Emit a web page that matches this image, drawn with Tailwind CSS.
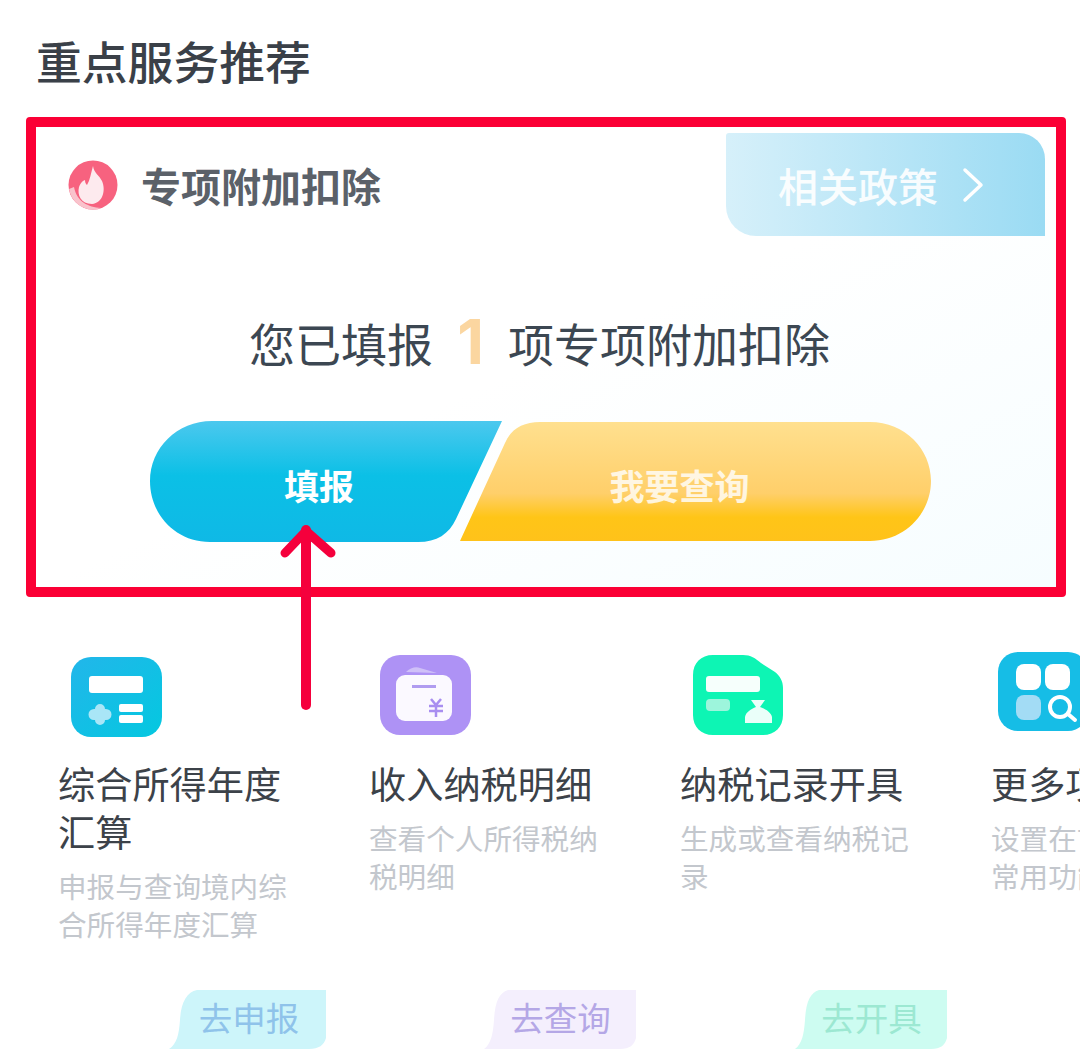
<!DOCTYPE html>
<html lang="zh-CN">
<head>
<meta charset="utf-8">
<title>重点服务推荐</title>
<script src="https://cdn.jsdelivr.net/npm/@tailwindcss/browser@4"></script>
</head>
<body class="bg-white">
<main class="relative w-[1080px] h-[1056px] overflow-hidden bg-white [font-family:'Noto_Sans_CJK_SC','Noto_Sans',sans-serif]">
  <h1 class="pt-[30px] pl-[36px] h-[92px] mb-[25px] text-[45.800px] leading-[60px] font-medium text-[#3a4048]">重点服务推荐</h1>

  <section class="ml-[26px] w-[1040px] h-[480px] border-[10px] border-[#fb0035] rounded-[4px] bg-gradient-to-br from-white via-white to-[#f6fdff]">
    <div class="flex items-center justify-between pt-[6px] pr-[11px] pl-[32px]">
      <div class="flex items-center gap-[23px]">
        <svg class="w-[50px] h-[50px]" viewBox="0 0 50 50">
          <circle cx="25" cy="25" r="24.500" fill="#f7627f"/>
          <path d="M1 29a24.500 24.500 0 0 0 24 20.500c3 0 6-.6 8-1.500C20 47 9 42 6 27z" fill="#f9c3cc"/>
          <path d="M25 6c1 7 6 9 9 15 4 9 1 22-10 23-11 0-15-9-13-17 1-3 3-6 6-7 0 3 1 4 2 5 3-5 4-12 6-19z" fill="#fdeaee"/>
        </svg>
        <h2 class="text-[40px] leading-[56px] font-bold text-[#5b6169]">专项附加扣除</h2>
      </div>
      <a class="flex items-center w-[319px] h-[103px] pl-[52px] gap-[24px] rounded-tr-[26px] rounded-bl-[30px] rounded-tl-[3px] bg-gradient-to-r from-[#d6f0fa] to-[#9adbf3] text-white/90 text-[40px] font-medium">
        <span>相关政策</span>
        <svg class="w-[22px] h-[36px]" viewBox="0 0 22 36" fill="none" stroke="#fff" stroke-width="3.500" stroke-linecap="round" stroke-linejoin="round"><path d="M3 3l16 15L3 33"/></svg>
      </a>
    </div>

    <div class="ml-[114px] w-[781px] flex flex-col items-center">
      <p class="mt-[74px] h-[64px] pr-[2px] flex items-center justify-center text-[46px] text-[#3c4752]">
        <span>您已填报</span>
        <span class="w-[75px] text-center text-[62px] leading-[64px] font-bold text-[#fbd6a0] [font-family:'Inter',sans-serif]">1</span>
        <span>项专项附加扣除</span>
      </p>
      <div class="mt-[47px] w-full flex">
        <button class="relative w-[352px] h-[121px] flex items-center justify-center pr-[14px] pt-[8px] text-[35px] font-bold text-white">
          <svg class="absolute inset-0" width="352" height="121" viewBox="0 0 352 121">
            <defs><linearGradient id="b1" x1="0" y1="0" x2="0" y2="1"><stop offset="0" stop-color="#4cc8ee"/><stop offset=".45" stop-color="#0bc0e6"/><stop offset="1" stop-color="#0fb9e6"/></linearGradient></defs>
            <path d="M62 0H352L306 98C299 113 287 121 268 121H60C25 121 0 93 0 60S27 0 62 0z" fill="url(#b1)"/>
          </svg>
          <span class="relative">填报</span>
        </button>
        <button class="relative -ml-[42px] w-[471px] h-[121px] flex items-center justify-center pr-[32px] pt-[8px] text-[35px] font-bold text-white/80">
          <svg class="absolute inset-0" width="471" height="121" viewBox="0 0 471 121">
            <defs><linearGradient id="b2" x1="0" y1="0" x2="0" y2="1"><stop offset="0" stop-color="#ffe08f"/><stop offset=".6" stop-color="#ffcf6a"/><stop offset=".8" stop-color="#ffc517"/><stop offset="1" stop-color="#ffc21a"/></linearGradient></defs>
            <path d="M0 120L45 22C51 8 63 1 80 1H410C445 1 471 28 471 60S445 120 410 120z" fill="url(#b2)"/>
          </svg>
          <span class="relative">我要查询</span>
        </button>
      </div>
    </div>
  </section>

  <div class="mt-[55px] flex w-[1244px] h-[398px] text-[#3c4249]">
    <article class="w-[311px] pl-[58px] flex flex-col">
      <div class="h-[107px] pt-[5px] pl-[13px]">
        <svg class="w-[91px] h-[80px]" viewBox="0 0 91 80">
          <defs><linearGradient id="i1" x1="0" y1="0" x2="1" y2="1"><stop offset="0" stop-color="#22b6ea"/><stop offset="1" stop-color="#04c8e0"/></linearGradient></defs>
          <rect width="91" height="80" rx="20" fill="url(#i1)"/>
          <rect x="18" y="19" width="54" height="17" rx="3" fill="#fff"/>
          <path d="M29 47a5 5 0 0 1 5 5h1a5 5 0 0 1 0 11h-1a5 5 0 0 1-10 0h-1a5 5 0 0 1 0-11h1a5 5 0 0 1 5-5z" fill="#a9e6f7"/>
          <rect x="48" y="47" width="24" height="8" rx="2" fill="#fff"/>
          <rect x="48" y="58" width="24" height="8" rx="2" fill="#fff"/>
        </svg>
      </div>
      <h3 class="w-[232px] text-[37.200px] leading-[48px] font-normal">综合所得年度汇算</h3>
      <p class="mt-[12px] w-[232px] text-[28.600px] leading-[38px] text-[#c3c7cd]">申报与查询境内综合所得年度汇算</p>
      <a class="relative mt-auto ml-[111px] w-[158px] h-[60px] flex items-center justify-center pl-[2px] pb-[6px] text-[33.500px] text-[#8fc3ea]">
        <svg class="absolute inset-0" width="158" height="60" viewBox="0 0 158 60"><path d="M28 0H157V48C155 55 150 59 140 59H0C8 54 10 44 11 30 12 12 18 2 28 0z" fill="#cdf5fa"/></svg>
        <span class="relative">去申报</span>
      </a>
    </article>

    <article class="w-[311px] pl-[58px] flex flex-col">
      <div class="h-[107px] pt-[3px] pl-[11px]">
        <svg class="w-[91px] h-[80px]" viewBox="0 0 91 80">
          <rect width="91" height="80" rx="20" fill="#ae92f5"/>
          <path d="M26 17c4-4 10-6 14-4l17 5z" fill="#cfc0f8"/>
          <rect x="16" y="20" width="56" height="46" rx="9" fill="#fbf9ff"/>
          <rect x="32" y="30" width="24" height="3" fill="#b09cf0"/>
          <path d="M51 44l5 6 5-6M49 51h14M49 56h14M56 50v12" fill="none" stroke="#a88ef0" stroke-width="2.500"/>
        </svg>
      </div>
      <h3 class="w-[232px] text-[37.200px] leading-[48px] font-normal">收入纳税明细</h3>
      <p class="mt-[12px] w-[232px] text-[28.600px] leading-[38px] text-[#c3c7cd]">查看个人所得税纳税明细</p>
      <a class="relative mt-auto ml-[115px] w-[153px] h-[60px] flex items-center justify-center pb-[6px] text-[33.500px] text-[#b4a7e6]">
        <svg class="absolute inset-0" width="153" height="60" viewBox="0 0 153 60"><path d="M24 0H152V48C150 55 146 59 136 59H0C7 54 9 44 10 30 11 12 15 3 24 0z" fill="#f4effd"/></svg>
        <span class="relative">去查询</span>
      </a>
    </article>

    <article class="w-[311px] pl-[58px] flex flex-col">
      <div class="h-[107px] pt-[3px] pl-[13px]">
        <svg class="w-[90px] h-[80px]" viewBox="0 0 90 80">
          <path d="M20 0H50C58 0 62 3 68 8L82 17C87 21 90 26 90 33V60C90 72 82 80 70 80H20C8 80 0 72 0 60V20C0 8 8 0 20 0z" fill="#0df5b4"/>
          <rect x="13" y="21" width="54" height="16" rx="3" fill="#f6fffc"/>
          <rect x="13" y="44" width="24" height="12" rx="4" fill="#9df5dc"/>
          <path d="M58 45H72L67 52C72 54 78 57 79 62V68H52V62C53 57 58 54 63 52z" fill="#eafff9"/>
        </svg>
      </div>
      <h3 class="w-[232px] text-[37.200px] leading-[48px] font-normal">纳税记录开具</h3>
      <p class="mt-[12px] w-[232px] text-[28.600px] leading-[38px] text-[#c3c7cd]">生成或查看纳税记录</p>
      <a class="relative mt-auto ml-[115px] w-[153px] h-[60px] flex items-center justify-center pb-[6px] text-[33.500px] text-[#9ce8d2]">
        <svg class="absolute inset-0" width="153" height="60" viewBox="0 0 153 60"><path d="M24 0H152V48C150 55 146 59 136 59H0C7 54 9 44 10 30 11 12 15 3 24 0z" fill="#cdfcf1"/></svg>
        <span class="relative">去开具</span>
      </a>
    </article>

    <article class="w-[311px] pl-[58px] flex flex-col">
      <div class="h-[107px] pl-[7px]">
        <svg class="w-[90px] h-[80px]" viewBox="0 0 90 80">
          <rect width="90" height="79" rx="20" fill="#16bde6"/>
          <rect x="18" y="12" width="25" height="26" rx="8" fill="#fff"/>
          <rect x="47" y="12" width="25" height="26" rx="8" fill="#fff"/>
          <rect x="18" y="43" width="25" height="25" rx="8" fill="#a3dcf5"/>
          <circle cx="62" cy="55" r="10" fill="none" stroke="#fff" stroke-width="4"/>
          <path d="M70 62l7 6" stroke="#fff" stroke-width="4" stroke-linecap="round"/>
        </svg>
      </div>
      <h3 class="w-[232px] text-[37.200px] leading-[48px] font-normal">更多项目</h3>
      <p class="mt-[12px] w-[232px] text-[28.600px] leading-[38px] text-[#c3c7cd]">设置在首页显示的常用功能</p>
    </article>
  </div>

  <svg class="absolute left-[275px] top-[520px] w-[65px] h-[195px]" viewBox="0 0 65 195" fill="none" stroke="#f5003c" stroke-linecap="round" stroke-linejoin="round">
    <path d="M31 10V185" stroke-width="10"/>
    <path d="M10 33L31 11 56 33" stroke-width="9"/>
  </svg>
</main>
</body>
</html>
